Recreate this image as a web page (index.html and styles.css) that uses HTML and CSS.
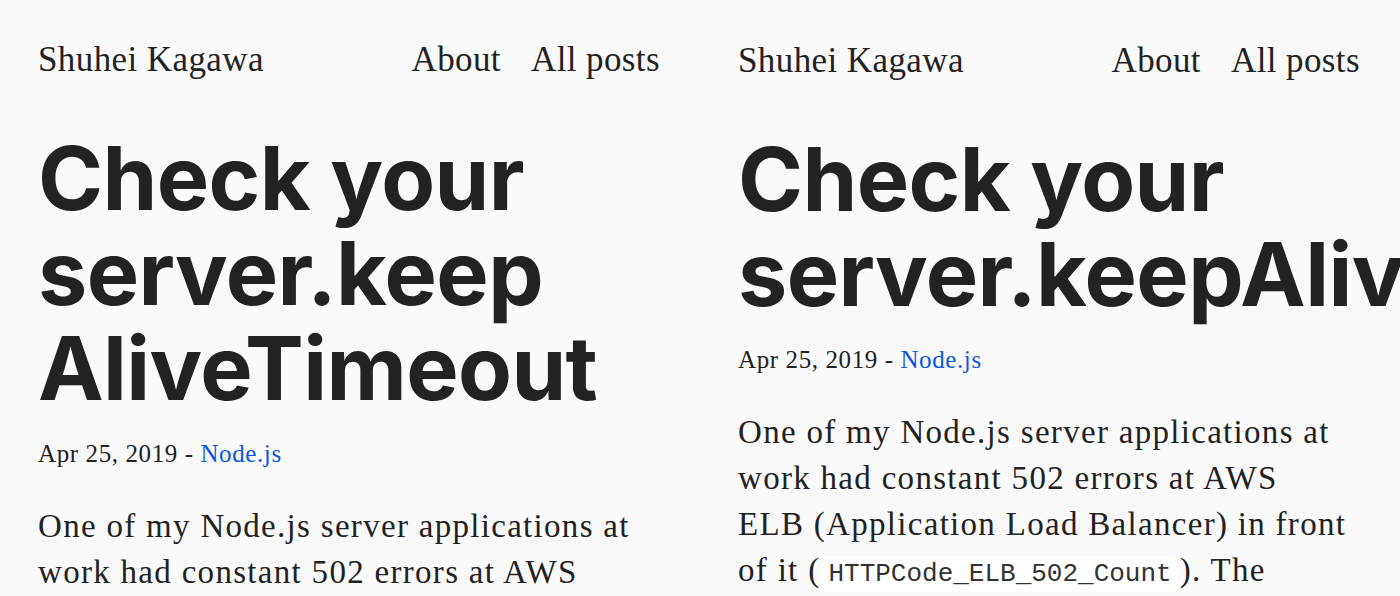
FILE: index.html
```html
<!DOCTYPE html>
<html lang="en">
<head>
<meta charset="utf-8">
<title>Check your server.keepAliveTimeout</title>
<link rel="stylesheet" href="styles.css">
</head>
<body>
<div class="panels">
  <section class="panel">
    <header class="nav">
      <a class="brand" href="#">Shuhei Kagawa</a>
      <nav class="links"><a href="#">About</a><a href="#">All posts</a></nav>
    </header>
    <h1 class="title">Check your server.keep<wbr>AliveTimeout</h1>
    <p class="meta">Apr 25, 2019 - <a href="#">Node.js</a></p>
    <p class="body">One of my Node.js server applications at work had constant 502 errors at AWS ELB (Application Load Balancer) in front of it (<code>HTTPCode_ELB_502_Count</code>). The</p>
  </section>
  <section class="panel panel-wide">
    <header class="nav">
      <a class="brand" href="#">Shuhei Kagawa</a>
      <nav class="links"><a href="#">About</a><a href="#">All posts</a></nav>
    </header>
    <h1 class="title">Check your server.keepAliveTimeout</h1>
    <p class="meta">Apr 25, 2019 - <a href="#">Node.js</a></p>
    <p class="body">One of my Node.js server applications at work had constant 502 errors at AWS ELB (Application Load Balancer) in front of it (<code>HTTPCode_ELB_502_Count</code>). The</p>
  </section>
</div>
</body>
</html>
```
FILE: styles.css
```css
html, body {
  margin: 0;
  padding: 0;
  background: #fafafa;
  height: 100%;
  overflow: hidden;
}
.panels {
  display: flex;
  width: 1400px;
  height: 596px;
}
.panel {
  width: 700px;
  flex: 0 0 700px;
  box-sizing: border-box;
  padding: 40px 40px 0 38px;
  overflow: hidden;
  color: #222;
  font-family: "Liberation Serif", serif;
}
.panel-wide {
  padding-top: 41px;
}
.nav {
  display: flex;
  justify-content: space-between;
  align-items: baseline;
  font-size: 35px;
  line-height: 40px;
  letter-spacing: 0.4px;
}
.nav a {
  color: #222;
  text-decoration: none;
}
.links {
  display: flex;
  gap: 30px;
}
.title {
  margin: 51px 0 0;
  font-family: Inter, "Liberation Sans", sans-serif;
  font-weight: 700;
  font-size: 88px;
  line-height: 95px;
  letter-spacing: -0.6px;
  color: #222;
}
.meta {
  margin: 23px 0 0;
  font-size: 25px;
  line-height: 30px;
  letter-spacing: 0.6px;
}
.meta a {
  color: #0a56e5;
  text-decoration: none;
}
.body {
  margin: 34px 0 0;
  max-width: 611px;
  font-size: 33px;
  line-height: 46px;
  letter-spacing: 1.3px;
}
.body code {
  font-family: "Liberation Mono", monospace;
  font-size: 26px;
  letter-spacing: 0;
  color: #333;
  background: #fff;
  border-radius: 4px;
  padding: 3px 6px;
  margin: 0 2px;
}
```
